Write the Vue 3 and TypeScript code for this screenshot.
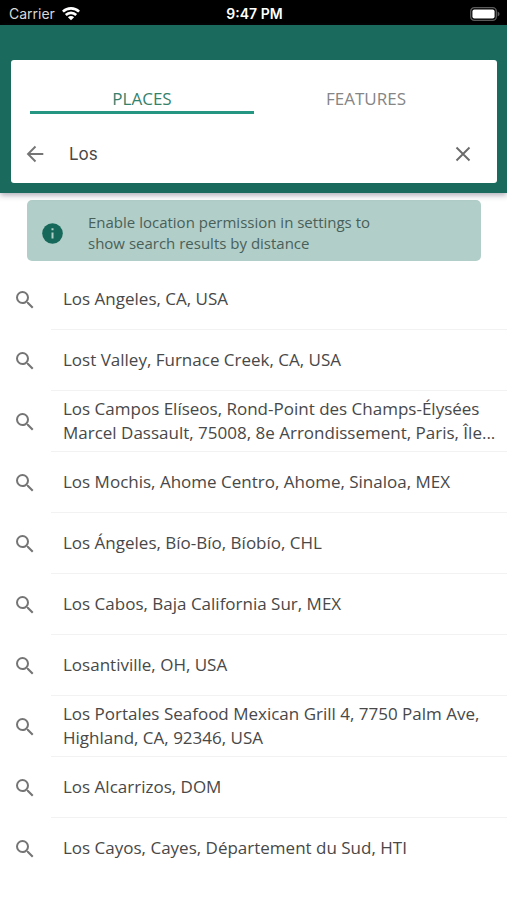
<script setup lang="ts">
import { ref } from 'vue'

type Tab = 'places' | 'features'

const tabs: { id: Tab; label: string }[] = [
  { id: 'places', label: 'PLACES' },
  { id: 'features', label: 'FEATURES' },
]
const activeTab = ref<Tab>('places')
const query = ref('Los')

const results: string[] = [
  'Los Angeles, CA, USA',
  'Lost Valley, Furnace Creek, CA, USA',
  'Los Campos Elíseos, Rond-Point des Champs-Élysées Marcel Dassault, 75008, 8e Arrondissement, Paris, Île...',
  'Los Mochis, Ahome Centro, Ahome, Sinaloa, MEX',
  'Los Ángeles, Bío-Bío, Bíobío, CHL',
  'Los Cabos, Baja California Sur, MEX',
  'Losantiville, OH, USA',
  'Los Portales Seafood Mexican Grill 4, 7750 Palm Ave, Highland, CA, 92346, USA',
  'Los Alcarrizos, DOM',
  'Los Cayos, Cayes, Département du Sud, HTI',
]
</script>

<template>
  <div class="screen">
    <div class="status-bar">
      <div class="carrier">
        <span>Carrier</span>
        <svg width="18" height="14" viewBox="0 0 18 14" aria-hidden="true">
          <g fill="none" stroke="#fff" stroke-width="2.6">
            <path d="M0.9 4.7a11.5 11.5 0 0 1 16.2 0" />
            <path d="M3.8 8a7.4 7.4 0 0 1 10.4 0" />
          </g>
          <path d="M9 13.300 5.900 10.300a4.400 4.400 0 0 1 6.200 0z" fill="#fff" />
        </svg>
      </div>
      <span class="clock">9:47 PM</span>
      <div class="battery">
        <svg width="30" height="14" viewBox="0 0 30 14" aria-hidden="true">
          <rect x="0.7" y="0.7" width="25.6" height="12.6" rx="3.6" fill="none" stroke="#5c5c5c" stroke-width="1.3" />
          <rect x="2.4" y="2.4" width="22.2" height="9.2" rx="2" fill="#fff" />
          <path d="M27.6 4.6c1.2.5 1.9 1.4 1.9 2.4s-.7 1.9-1.9 2.4z" fill="#5c5c5c" />
        </svg>
      </div>
    </div>

    <header class="header">
      <div class="card">
        <div class="tabs" role="tablist">
          <button
            v-for="tab in tabs"
            :key="tab.id"
            type="button"
            role="tab"
            class="tab"
            :class="{ active: activeTab === tab.id }"
            :aria-selected="activeTab === tab.id"
            @click="activeTab = tab.id"
          >
            {{ tab.label }}
          </button>
        </div>
        <form class="search" role="search" @submit.prevent>
          <button type="button" class="icon-button" aria-label="Back">
            <svg width="24" height="24" viewBox="0 0 24 24" fill="none" stroke="#757575" stroke-width="1.9" aria-hidden="true">
              <path d="M20.300 12H5M12.500 4.500 5 12l7.500 7.500" />
            </svg>
          </button>
          <input v-model="query" class="search-input" type="text" aria-label="Search places" />
          <button type="button" class="icon-button" aria-label="Clear search" @click="query = ''">
            <svg width="24" height="24" viewBox="0 0 24 24" fill="none" stroke="#6b6b6b" stroke-width="1.9" aria-hidden="true">
              <path d="M5.500 5.500l13 13M18.500 5.500l-13 13" />
            </svg>
          </button>
        </form>
      </div>
    </header>

    <main>
      <div class="notice">
        <svg class="notice-icon" width="21" height="21" viewBox="0 0 21 21" aria-hidden="true">
          <circle cx="10.5" cy="10.5" r="10.3" fill="#16695a" />
          <path d="M9.500 9.400h2v6.200h-2zM9.500 5.300h2v2h-2z" fill="#b2cec8" />
        </svg>
        <p class="notice-text">Enable location permission in settings to show search results by distance</p>
      </div>

      <ul class="results">
        <li v-for="place in results" :key="place">
          <button type="button" class="result">
            <span class="result-icon">
              <svg width="24" height="24" viewBox="0 0 24 24" aria-hidden="true">
                <path
                  fill="#757575"
                  d="M15.500 14h-.79l-.28-.27A6.471 6.471 0 0 0 16 9.500 6.500 6.500 0 1 0 9.500 16c1.610 0 3.090-.59 4.230-1.570l.27.28v.79l5 4.990L20.490 19l-4.990-5zm-6 0C7.010 14 5 11.990 5 9.500S7.010 5 9.500 5 14 7.010 14 9.500 11.990 14 9.500 14z"
                />
              </svg>
            </span>
            <span class="result-body"><span class="result-label">{{ place }}</span></span>
          </button>
        </li>
      </ul>
    </main>
  </div>
</template>

<style>
body {
  background: #fff;
}
</style>

<style scoped>
.screen {
  min-height: 100vh;
  background: #fff;
  color: #484848;
  font-family: 'Open Sans', 'Noto Sans', sans-serif;
}

button {
  margin: 0;
  padding: 0;
  border: 0;
  background: none;
  color: inherit;
  font: inherit;
  cursor: pointer;
}

svg {
  display: block;
}

.status-bar {
  display: grid;
  grid-template-columns: 1fr auto 1fr;
  align-items: center;
  height: 25px;
  padding: 2px 7px 0 9px;
  box-sizing: border-box;
  background: #000;
  color: #fff;
  font-family: Inter, sans-serif;
  font-size: 14px;
}

.carrier {
  display: flex;
  align-items: center;
  gap: 7px;
  color: #d8d8d8;
}

.clock {
  font-weight: 600;
}

.battery {
  justify-self: end;
}

.header {
  position: relative;
  padding: 35px 10px 10px 11px;
  background: #1a6b5e;
  box-shadow: 0 2px 6px rgba(40, 30, 60, 0.4);
}

.card {
  padding: 20px 19px 0;
  border-radius: 3px;
  background: #fff;
}

.tabs {
  display: grid;
  grid-template-columns: 1fr 1fr;
}

.tab {
  height: 34px;
  padding-top: 5px;
  border-bottom: 3px solid transparent;
  color: #858585;
  font-size: 17px;
}

.tab.active {
  border-color: #259681;
  color: #35826c;
}

.search {
  display: flex;
  align-items: center;
  height: 69px;
  padding-top: 10px;
  box-sizing: border-box;
  margin: 0 3px 0 -7px;
}

.icon-button {
  display: grid;
  place-items: center;
  width: 24px;
  height: 40px;
}

.search-input {
  flex: 1;
  min-width: 0;
  margin: 0 20px 0 22px;
  padding: 0;
  border: 0;
  outline: 0;
  background: none;
  color: #484848;
  font-family: Inter, sans-serif;
  font-size: 17px;
}

.notice {
  display: flex;
  align-items: center;
  margin: 7px 26px 8px 27px;
  padding: 12px 15px 7px;
  border-radius: 5px;
  background: #b2cec8;
}

.notice-icon {
  flex: none;
}

.notice-text {
  max-width: 300px;
  margin: 0 0 0 25px;
  color: #48605a;
  font-size: 15px;
  line-height: 21px;
}

.results {
  margin: 0;
  padding: 0;
  list-style: none;
}

.result {
  display: flex;
  align-items: stretch;
  width: 100%;
  text-align: left;
}

.result-icon {
  display: grid;
  place-items: center;
  flex: none;
  width: 50px;
}

.result-body {
  display: flex;
  align-items: center;
  flex: 1;
  min-height: 60px;
  margin-left: 1px;
  padding: 0 4px 0 12px;
  border-bottom: 1px solid #f2f2f2;
}

li:last-child .result-body {
  border-color: transparent;
}

.result-label {
  font-size: 17px;
  line-height: 24px;
}
</style>
